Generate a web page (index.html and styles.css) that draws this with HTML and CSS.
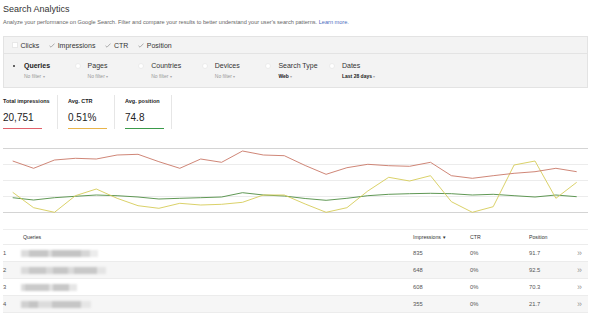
FILE: index.html
```
<!DOCTYPE html>
<html>
<head>
<meta charset="utf-8">
<link rel="stylesheet" href="styles.css">
</head>
<body>
<div class="page">
  <h1 class="title">Search Analytics</h1>
  <p class="intro">Analyze your performance on Google Search. Filter and compare your results to better understand your user's search patterns. <a class="link">Learn more.</a></p>

  <div class="panel">
    <div class="metrics">
      <div class="metric"><span class="box"></span><span>Clicks</span></div>
      <div class="metric"><svg class="check" viewBox="0 0 6 5"><path d="M0.5 2.8 L2 4.2 L5.5 0.6"/></svg><span>Impressions</span></div>
      <div class="metric"><svg class="check" viewBox="0 0 6 5"><path d="M0.5 2.8 L2 4.2 L5.5 0.6"/></svg><span>CTR</span></div>
      <div class="metric"><svg class="check" viewBox="0 0 6 5"><path d="M0.5 2.8 L2 4.2 L5.5 0.6"/></svg><span>Position</span></div>
    </div>
    <div class="filters">
      <div class="filter"><span class="radio on"></span><div><div class="fname bold">Queries</div><div class="fsub">No filter <span class="caret">▾</span></div></div></div>
      <div class="filter"><span class="radio"></span><div><div class="fname">Pages</div><div class="fsub">No filter <span class="caret">▾</span></div></div></div>
      <div class="filter"><span class="radio"></span><div><div class="fname">Countries</div><div class="fsub">No filter <span class="caret">▾</span></div></div></div>
      <div class="filter"><span class="radio"></span><div><div class="fname">Devices</div><div class="fsub">No filter <span class="caret">▾</span></div></div></div>
      <div class="filter"><span class="radio"></span><div><div class="fname">Search Type</div><div class="fsub dark">Web <span class="caret">▾</span></div></div></div>
      <div class="filter"><span class="radio"></span><div><div class="fname">Dates</div><div class="fsub dark">Last 28 days <span class="caret">▾</span></div></div></div>
    </div>
  </div>

  <div class="cards">
    <div class="card first"><div class="clabel">Total impressions</div><div class="cvalue">20,751</div><div class="uline red"></div></div>
    <div class="card"><div class="clabel">Avg. CTR</div><div class="cvalue">0.51%</div><div class="uline yellow"></div></div>
    <div class="card"><div class="clabel">Avg. position</div><div class="cvalue">74.8</div><div class="uline green"></div></div>
  </div>

  <svg class="chart" viewBox="3 135 585 90" width="585" height="90">
    <line class="grid dark" x1="3" y1="148.5" x2="588" y2="148.5"/>
    <line class="grid" x1="3" y1="164.5" x2="588" y2="164.5"/>
    <line class="grid" x1="3" y1="180.5" x2="588" y2="180.5"/>
    <line class="grid" x1="3" y1="196.5" x2="588" y2="196.5"/>
    <line class="grid dark" x1="3" y1="212.5" x2="588" y2="212.5"/>
    <polyline class="ln green-ln" points="12.7,197.7 33.6,200 54.5,197.7 75.4,196.3 96.3,195 117.1,195.7 138,197 158.9,199 179.8,198.3 200.7,197.7 221.6,197 242.5,192.7 263.4,195 284.3,196 305.2,198.5 326.1,200.3 346.9,198.3 367.8,195.7 388.7,194.3 409.6,193.7 430.5,193.3 451.4,193.7 472.3,195 493.2,194.3 514.1,195.7 535,197 555.9,195 576.7,196.7"/>
    <polyline class="ln yellow-ln" points="12.7,192.3 33.6,207.7 54.5,212.3 75.4,195.7 96.3,189 117.1,198.3 138,205.7 158.9,208.3 179.8,203.3 200.7,205 221.6,204.3 242.5,202.3 263.4,195 284.3,195 305.2,204 326.1,212.3 346.9,207.7 367.8,191 388.7,177.3 409.6,181 430.5,175.7 451.4,201.7 472.3,212.3 493.2,206.7 514.1,165 535,161 555.9,198.3 576.7,182.3"/>
    <polyline class="ln red-ln" points="12.7,161 33.6,168.3 54.5,160 75.4,158.3 96.3,159 117.1,155 138,154.3 158.9,161.7 179.8,168.3 200.7,159 221.6,162.3 242.5,151 263.4,155 284.3,155.7 305.2,165.5 326.1,174.3 346.9,167.7 367.8,164.3 388.7,165.7 409.6,166.3 430.5,162.3 451.4,175.7 472.3,178.3 493.2,175.7 514.1,173.3 535,171.7 555.9,168.3 576.7,171.7"/>
  </svg>

  <div class="table">
    <div class="row head">
      <div></div><div>Queries</div><div>Impressions<span class="sort">▼</span></div><div>CTR</div><div>Position</div><div></div>
    </div>
    <div class="row">
      <div>1</div><div><div class="blur b1"></div></div><div>835</div><div>0%</div><div>91.7</div><div class="more">»</div>
    </div>
    <div class="row alt">
      <div>2</div><div><div class="blur b2"></div></div><div>648</div><div>0%</div><div>92.5</div><div class="more">»</div>
    </div>
    <div class="row">
      <div>3</div><div><div class="blur b3"></div></div><div>608</div><div>0%</div><div>70.3</div><div class="more">»</div>
    </div>
    <div class="row alt">
      <div>4</div><div><div class="blur b4"></div></div><div>355</div><div>0%</div><div>21.7</div><div class="more">»</div>
    </div>
  </div>
</div>
</body>
</html>
```

FILE: styles.css
```
* { box-sizing: border-box; }
body {
  margin: 0;
  background: #fff;
  font-family: "Liberation Sans", Arial, sans-serif;
  color: #222;
}
.page {
  padding-left: 3px;
  width: 588px;
}
.title {
  margin: 0;
  padding-top: 3px;
  font-size: 9px;
  line-height: 12px;
  font-weight: normal;
  color: #333;
}
.intro {
  margin: 3px 0 0;
  font-size: 5.6px;
  line-height: 8px;
  color: #666;
  white-space: nowrap;
}
.link { color: #4a6cc0; }

.panel {
  margin-top: 10px;
  background: #f3f3f3;
  border: 1px solid #e3e3e3;
  border-bottom: none;
}
.metrics {
  display: flex;
  align-items: center;
  gap: 10px;
  height: 17px;
  padding-left: 8px;
  border-bottom: 1px solid #e3e3e3;
  font-size: 7px;
  color: #333;
}
.metric { display: flex; align-items: center; gap: 2.5px; }
.box {
  width: 6px; height: 6px;
  background: #fff;
  border: 1px solid #e8e8e8;
}
.check { width: 6px; height: 5px; }
.check path { fill: none; stroke: #999; stroke-width: 0.8; }

.filters {
  display: flex;
  height: 34px;
  padding: 6.5px 0 0 7px;
  border-bottom: 1px solid #e3e3e3;
}
.filter {
  width: 63.6px;
  display: flex;
  gap: 7px;
}
.radio {
  flex: none;
  margin-top: 2px;
  width: 6px; height: 6px;
  border-radius: 50%;
  background: #fff;
  border: 1px solid #ececec;
  position: relative;
}
.radio.on { background: transparent; border-color: transparent; }
.radio.on::after {
  content: "";
  position: absolute;
  left: 1.3px; top: 1.5px;
  width: 2px; height: 2px;
  border-radius: 50%;
  background: #333;
}
.fname {
  font-size: 7px;
  line-height: 9px;
  color: #333;
  white-space: nowrap;
  margin-bottom: 2px;
}
.fname.bold { font-weight: bold; color: #222; }
.fsub {
  font-size: 5px;
  line-height: 8px;
  color: #999;
  white-space: nowrap;
}
.fsub.dark { color: #222; font-weight: bold; }
.caret { color: #aaa; font-size: 4px; font-weight: normal; }

.cards {
  display: flex;
  height: 41px;
}
.card {
  width: 57px;
  margin-top: 7px;
  height: 34px;
  padding: 3px 0 0 10px;
  border-right: 1px solid #e6e6e6;
}
.card.first { width: 55px; padding-left: 0; }
.clabel {
  font-size: 5.5px;
  line-height: 7px;
  font-weight: bold;
  color: #222;
  white-space: nowrap;
}
.cvalue {
  margin-top: 6.5px;
  font-size: 10px;
  line-height: 12px;
  color: #222;
}
.uline {
  margin-top: 4px;
  width: 39px;
  height: 1.3px;
}
.uline.red { background: #e0606a; }
.uline.yellow { background: #e8b44a; }
.uline.green { background: #3a9a4a; }

.chart { display: block; margin-top: 6px; }
.grid { stroke: #ececec; stroke-width: 1; }
.grid.dark { stroke: #d4d4d4; }
.ln { fill: none; stroke-width: 0.9; stroke-linejoin: round; }
.red-ln { stroke: #c97868; }
.yellow-ln { stroke: #d6cc58; }
.green-ln { stroke: #4e8c42; }

.table {
  margin-top: 4px;
  width: 585px;
  border-top: 1px solid #eeeeee;
}
.row {
  display: grid;
  grid-template-columns: 20px 390px 57px 59px 48px 11px;
  align-items: center;
  height: 17px;
  border-bottom: 1px solid #ececec;
  font-size: 5.8px;
  color: #555;
}
.row.head {
  height: 15px;
  font-size: 5.2px;
  color: #333;
}
.row.alt { background: #f6f6f6; }
.sort { font-size: 4.5px; margin-left: 1px; }
.more { color: #999; font-size: 9px; line-height: 9px; }

.blur {
  margin-left: -2px;
  height: 7px;
  filter: blur(0.9px);
}
.b1 { width: 77px; background: linear-gradient(to right, #dcdcdc 0 10%, #c6c6c6 10% 35%, #dcdcdc 35% 40%, #c4c4c4 40% 78%, #d6d6d6 78% 90%, #ececec 90%); }
.b2 { width: 85px; background: linear-gradient(to right, #dadada 0 10%, #c8c8c8 10% 30%, #d8d8d8 30% 38%, #c6c6c6 38% 55%, #dadada 55% 62%, #c8c8c8 62% 90%, #e4e4e4 90%); }
.b3 { width: 56px; background: linear-gradient(to right, #dcdcdc 0 8%, #cacaca 8% 50%, #e2e2e2 50% 58%, #c8c8c8 58% 86%, #e6e6e6 86%); }
.b4 { width: 70px; background: linear-gradient(to right, #d0d0d0 0 12%, #c4c4c4 12% 25%, #dcdcdc 25% 45%, #c6c6c6 45% 86%, #e6e6e6 86%); }
```
